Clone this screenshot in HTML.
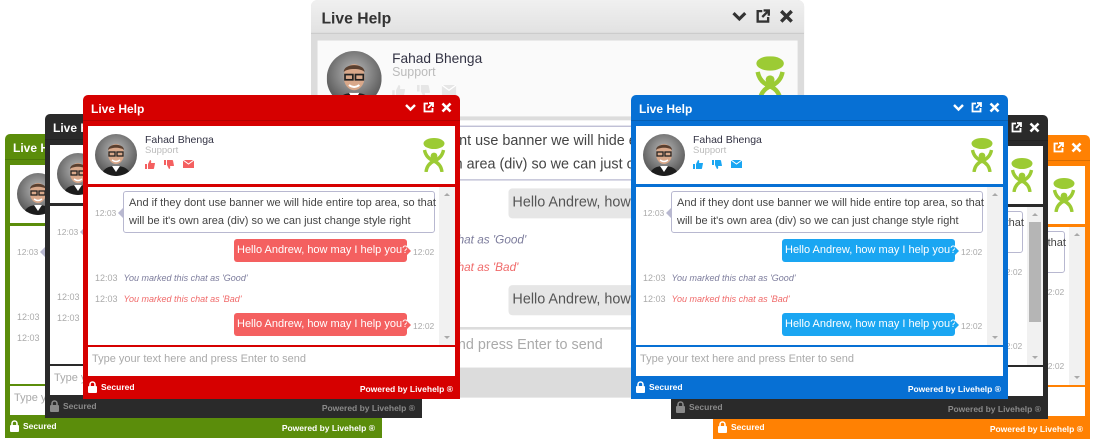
<!DOCTYPE html>
<html><head><meta charset="utf-8"><style>
*{box-sizing:border-box;margin:0;padding:0}
body{width:1114px;height:442px;background:#fff;position:relative;overflow:hidden;font-family:"Liberation Sans",Arial,sans-serif}
.w{position:absolute;width:377px;height:304px;background:var(--c);border-radius:5px 5px 0 0;overflow:hidden}
.hd{position:absolute;left:0;top:0;right:0;height:26px;border-bottom:1px solid rgba(0,0,0,.15)}
.tt{position:absolute;left:8px;top:7px;color:#fff;font-weight:bold;font-size:12px}
.ic{position:absolute;right:8px;top:7px;display:flex;gap:7px}
.prof,.chat,.inp{position:absolute;left:5px;width:367px;background:#fff}
.prof{top:31px;height:58px}
.chat{top:92px;height:158px;overflow:hidden}
.inp{top:252px;height:29px;font-size:11px;color:#aaa;padding:6px 0 0 4px}
.av{position:absolute;left:7px;top:8px;width:42px;height:42px;border-radius:50%;overflow:hidden}
.nm{position:absolute;left:57px;top:8px;font-size:10.5px;color:#334}
.sp{position:absolute;left:57px;top:19px;font-size:9.5px;color:#bbb}
.rt{position:absolute;left:57px;top:34px;display:flex;gap:9px}
.lg{position:absolute;right:9px;top:12px}
.sb{position:absolute;right:0;top:0;width:16px;height:158px;background:#f1f1f1}
.sb:before{content:"";position:absolute;left:5px;top:6px;border:3px solid transparent;border-bottom-color:#aaa;border-top:0}
.sb:after{content:"";position:absolute;left:5px;bottom:6px;border:3px solid transparent;border-top-color:#aaa;border-bottom:0}
.m1{position:absolute;left:35px;top:4px;width:312px;height:42px;border:1px solid #b8b8d0;border-radius:3px;font-size:11px;color:#444;line-height:18px;padding:2px 5px;white-space:nowrap}
.m1:before{content:"";position:absolute;left:-6px;top:16px;border:5px solid transparent;border-right-color:#b8b8d0;border-left:0}
.t{position:absolute;font-size:8.5px;color:#aaa}
.bb{position:absolute;left:146px;width:173px;height:23px;border-radius:3px;background:var(--b);color:#fff;font-size:11px;padding:5px 0 0 3px;white-space:nowrap}
.bb:after{content:"";position:absolute;right:-4px;top:8px;border:4px solid transparent;border-left-color:var(--b);border-right:0}
.sy{position:absolute;left:7px;font-size:9px;color:#aaa;white-space:nowrap}
.sy i{margin-left:6px}
.ft{position:absolute;left:0;right:0;top:283px;height:21px;font-size:8.5px;font-weight:bold;color:var(--f,#fff)}
.ft .s{position:absolute;left:5px;top:3px;display:flex;align-items:center;gap:4px}
.ft .p{position:absolute;right:7px;top:6px}
</style></head><body>

<div class="w" id="g" style="left:5px;top:134px;--c:#5b8d0b;--b:#f25c5c"></div>
<div class="w" id="k" style="left:45px;top:114px;--c:#2a2a2a;--b:#f25c5c;--f:#8a8a8a"></div>
<div class="w" id="o" style="left:713px;top:135px;--c:#ff8103;--b:#1aa6f2"></div>
<div class="w" id="k2" style="left:671px;top:115px;--c:#2a2a2a;--b:#1aa6f2;--f:#8a8a8a"></div>
<div class="w" id="gr" style="left:311px;top:0;--c:#dcdcdc;--b:#e6e6e6;--f:#dcdcdc;transform:scale(1.308);transform-origin:0 0"></div>
<div class="w" id="r" style="left:83px;top:95px;--c:#d60000;--b:#f46060"></div>
<div class="w" id="bl" style="left:631px;top:95px;--c:#0770d4;--b:#1aa6f2"></div>

<template id="tp">
<div class="hd"><div class="tt">Live Help</div><div class="ic">
<svg width="11" height="11" viewBox="0 0 11 11"><path d="M1 3l4.5 4.5L10 3" fill="none" stroke="currentColor" stroke-width="2.4"/></svg>
<svg width="11" height="11" viewBox="0 0 11 11"><path d="M5 1.5H1.5v8h8V6" fill="none" stroke="currentColor" stroke-width="1.8"/><path d="M6 1h4v4M10 1L5 6" fill="none" stroke="currentColor" stroke-width="1.8"/></svg>
<svg width="11" height="11" viewBox="0 0 11 11"><path d="M1.5 1.5l8 8M9.5 1.5l-8 8" stroke="currentColor" stroke-width="2.6"/></svg>
</div></div>
<div class="prof">
<div class="av"><svg width="42" height="42" viewBox="0 0 42 42"><defs><radialGradient id="rg" cx=".5" cy=".4" r=".6"><stop offset="0" stop-color="#bbb"/><stop offset="1" stop-color="#555"/></radialGradient></defs><rect width="42" height="42" fill="url(#rg)"/><path d="M6 42c2-8 8-10 15-10s13 2 15 10z" fill="#1d1d1d"/><path d="M17 32l4 6 4-6z" fill="#fff"/><ellipse cx="21" cy="20" rx="8" ry="10" fill="#d9a88a"/><path d="M13 16c0-7 16-7 16 0-3-3-13-3-16 0z" fill="#5a4030"/><rect x="14" y="18" width="6" height="4" fill="none" stroke="#222" stroke-width="1.3"/><rect x="22" y="18" width="6" height="4" fill="none" stroke="#222" stroke-width="1.3"/><path d="M17 26q4 3 8 0" stroke="#fff" stroke-width="1.5" fill="none"/></svg></div>
<div class="nm">Fahad Bhenga</div><div class="sp">Support</div>
<div class="rt" style="color:var(--b)">
<svg width="10" height="9" viewBox="0 0 10 9"><path d="M0 4h2v5H0zM3 4l2-4c1 0 1.5 1 1 3h3.5c.5 0 .7 1 .3 1.3L9 8.5C8.8 9 8 9 8 9H3z" fill="currentColor"/></svg>
<svg width="10" height="9" viewBox="0 0 10 9" style="transform:scaleY(-1)"><path d="M0 4h2v5H0zM3 4l2-4c1 0 1.5 1 1 3h3.5c.5 0 .7 1 .3 1.3L9 8.5C8.8 9 8 9 8 9H3z" fill="currentColor"/></svg>
<svg width="11" height="8" viewBox="0 0 11 8"><rect width="11" height="8" fill="currentColor"/><path d="M0 0l5.5 4L11 0" stroke="#fff" fill="none"/></svg>
</div>
<svg class="lg" width="24" height="34" viewBox="0 0 24 34"><ellipse cx="12" cy="5.5" rx="10.5" ry="5.5" fill="#9ccb34"/><circle cx="12" cy="18" r="3.4" fill="#9ccb34"/><path d="M2.5 12q1.5 8 9.5 11q8-3 9.5-11M4 34q1-8 8-11q7 3 8 11" fill="none" stroke="#9ccb34" stroke-width="3.4"/></svg>
</div>
<div class="chat">
<div class="t" style="left:7px;top:21px">12:03</div>
<div class="m1">And if they dont use banner we will hide entire top area, so that<br>will be it's own area (div) so we can just change style right</div>
<div class="bb" style="top:52px">Hello Andrew, how may I help you?</div><div class="t" style="left:325px;top:60px">12:02</div>
<div class="sy" style="top:86px">12:03<i style="color:#7c7c9c">You marked this chat as 'Good'</i></div>
<div class="sy" style="top:107px">12:03<i style="color:#f06a6a">You marked this chat as 'Bad'</i></div>
<div class="bb" style="top:126px">Hello Andrew, how may I help you?</div><div class="t" style="left:325px;top:134px">12:02</div>
<div class="sb"></div>
</div>
<div class="inp">Type your text here and press Enter to send</div>
<div class="ft"><div class="s"><svg width="9" height="12" viewBox="0 0 9 12"><path d="M2 5V3.5a2.5 2.5 0 015 0V5" fill="none" stroke="currentColor" stroke-width="1.6"/><rect y="5" width="9" height="7" rx="1" fill="currentColor"/></svg>Secured</div><div class="p">Powered by Livehelp ®</div></div>
</template>
<script>
var t=document.getElementById('tp').innerHTML;
document.querySelectorAll('.w').forEach(function(w){w.innerHTML=t;w.style.color='#fff';});
var g=document.getElementById('gr');
g.querySelector('.hd').style.background='linear-gradient(#f0f0f0,#e2e2e2)';
g.querySelector('.tt').style.color='#333';
g.querySelector('.ic').style.color='#333';
g.querySelectorAll('.bb').forEach(function(b){b.style.color='#555'});
g.querySelector('.prof').style.background='#fafafa';
var k2=document.getElementById('k2');k2.querySelector('.sb').innerHTML='<div style="position:absolute;left:2px;top:15px;width:12px;height:100px;background:#b5b5b5"></div>';
</script>
</body></html>
